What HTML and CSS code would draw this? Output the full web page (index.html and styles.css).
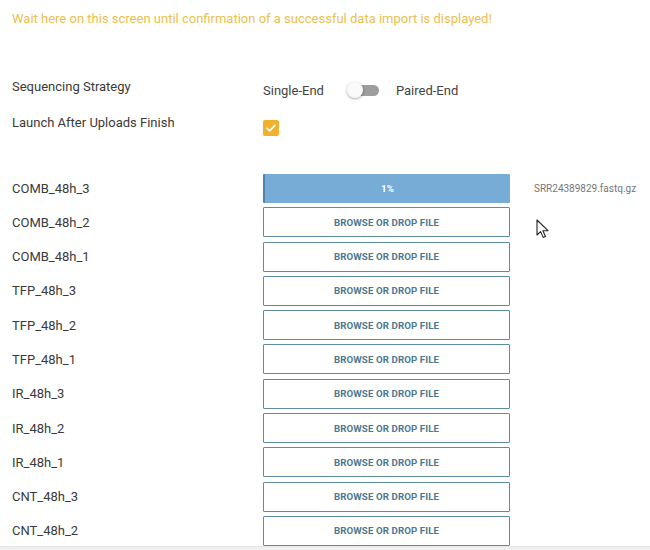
FILE: index.html
```html
<!DOCTYPE html>
<html>
<head>
<meta charset="utf-8">
<link rel="stylesheet" href="styles.css">
</head>
<body>
<div class="page">
  <p class="notice">Wait here on this screen until confirmation of a successful data import is displayed!</p>

  <div class="settings">
    <div class="setting">
      <span class="label">Sequencing Strategy</span>
      <div class="control toggle-group">
        <span>Single-End</span>
        <span class="toggle"><span class="track"></span><span class="knob"></span></span>
        <span>Paired-End</span>
      </div>
    </div>
    <div class="setting">
      <span class="label">Launch After Uploads Finish</span>
      <div class="control">
        <span class="checkbox">
          <svg viewBox="0 0 16 16" width="16" height="16"><path d="M4 8.3l2.6 2.6L12 5.4" fill="none" stroke="#fff" stroke-width="1.6" stroke-linecap="round" stroke-linejoin="round"/></svg>
        </span>
      </div>
    </div>
  </div>

  <div class="uploads">
    <div class="row">
      <span class="label">COMB_48h_3</span>
      <div class="drop progress"><span>1%</span></div>
      <span class="filename">SRR24389829.fastq.gz</span>
    </div>
    <div class="row"><span class="label">COMB_48h_2</span><div class="drop">BROWSE OR DROP FILE</div></div>
    <div class="row"><span class="label">COMB_48h_1</span><div class="drop">BROWSE OR DROP FILE</div></div>
    <div class="row"><span class="label">TFP_48h_3</span><div class="drop">BROWSE OR DROP FILE</div></div>
    <div class="row"><span class="label">TFP_48h_2</span><div class="drop">BROWSE OR DROP FILE</div></div>
    <div class="row"><span class="label">TFP_48h_1</span><div class="drop">BROWSE OR DROP FILE</div></div>
    <div class="row"><span class="label">IR_48h_3</span><div class="drop">BROWSE OR DROP FILE</div></div>
    <div class="row"><span class="label">IR_48h_2</span><div class="drop">BROWSE OR DROP FILE</div></div>
    <div class="row"><span class="label">IR_48h_1</span><div class="drop">BROWSE OR DROP FILE</div></div>
    <div class="row"><span class="label">CNT_48h_3</span><div class="drop">BROWSE OR DROP FILE</div></div>
    <div class="row"><span class="label">CNT_48h_2</span><div class="drop">BROWSE OR DROP FILE</div></div>
    <div class="row"><span class="label"></span><div class="drop"></div></div>
  </div>

  <svg class="cursor" width="14" height="20" viewBox="0 0 14 20"><path d="M1 1v15l3.6-3.4 2.6 5.8 2.3-1-2.6-5.7H12z" fill="#fff" stroke="#222" stroke-width="1.1" stroke-linejoin="round"/></svg>
</div>
<div class="bottom-bar"></div>
</body>
</html>
```
FILE: styles.css
```css
html, body {
  margin: 0;
  padding: 0;
  background: #fff;
  overflow: hidden;
  height: 550px;
}
body {
  font-family: Roboto, "Liberation Sans", Arial, sans-serif;
  color: #3a3a3a;
  font-size: 13px;
}
.page {
  position: relative;
  padding: 12px 0 0 12px;
}
.notice {
  margin: 0;
  color: #e9bf4f;
  font-size: 13px;
  line-height: 14px;
}
.settings {
  margin-top: 51px;
}
.setting {
  display: grid;
  grid-template-columns: 251px auto;
  align-items: start;
  height: 36px;
}
.setting .label {
  line-height: 20px;
  padding-top: 0;
}
.control {
  display: flex;
  align-items: center;
  height: 26px;
}
.toggle-group {
  font-size: 13px;
  color: #444;
}
.toggle {
  position: relative;
  width: 34px;
  height: 16px;
  margin: 0 15px 0 23px;
}
.track {
  position: absolute;
  left: 4px;
  top: 3px;
  width: 28px;
  height: 11px;
  border-radius: 6px;
  background: #9d9d9d;
}
.knob {
  position: absolute;
  left: 0;
  top: 0;
  width: 16px;
  height: 16px;
  border-radius: 50%;
  background: #fafafa;
  box-shadow: 0 1px 3px rgba(0,0,0,0.35);
}
.checkbox {
  display: inline-flex;
  width: 16px;
  height: 16px;
  background: #efb12e;
  border-radius: 2px;
  margin-top: 4px;
}
.uploads {
  margin-top: 24px;
  display: flex;
  flex-direction: column;
  gap: 4.3px;
}
.row {
  display: grid;
  grid-template-columns: 251px 247px auto;
  align-items: center;
  height: 30px;
}
.drop {
  box-sizing: border-box;
  height: 30px;
  border: 1px solid #5f8d9e;
  border-radius: 1px;
  display: flex;
  align-items: center;
  justify-content: center;
  font-size: 9.7px;
  font-weight: 700;
  color: #4d7890;
  letter-spacing: 0.1px;
}
.drop.progress {
  background: #76acd6;
  border: none;
  border-left: 2px solid #4f84ad;
  color: #fff;
  font-size: 9.7px;
  height: 29px;
}
.filename {
  margin-left: 24px;
  font-size: 10px;
  color: #777;
}
.cursor {
  position: absolute;
  left: 536px;
  top: 219px;
}
.bottom-bar {
  position: fixed;
  left: 0;
  right: 0;
  bottom: 0;
  height: 3px;
  background: #f0f0f0;
  border-top: 1px solid #e6e6e6;
}
```
